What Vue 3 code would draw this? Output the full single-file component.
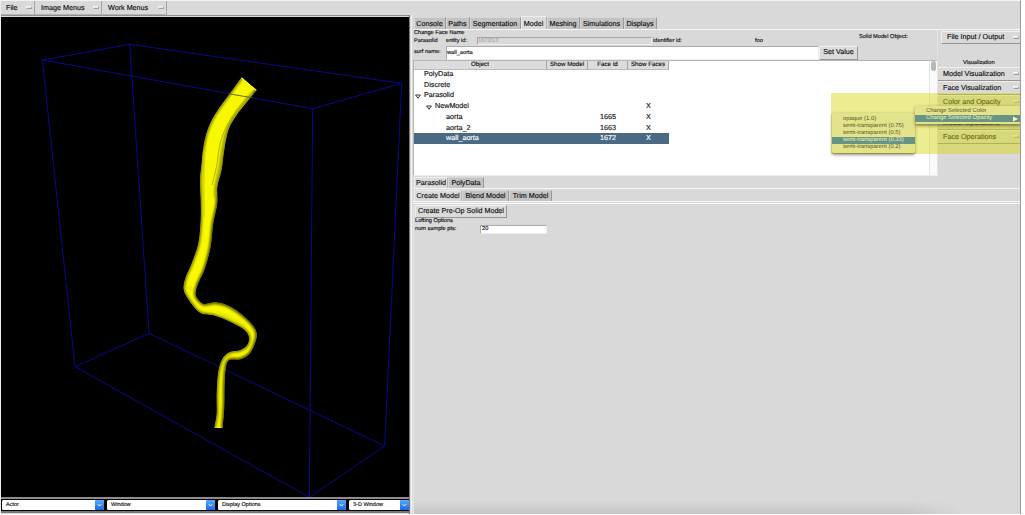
<script setup>
const menus = [
  { label: 'File', width: 34 },
  { label: 'Image Menus', width: 67 },
  { label: 'Work Menus', width: 65 },
]
const combos = [
  { label: 'Actor', width: 102 },
  { label: 'Window', width: 108 },
  { label: 'Display Options', width: 128 },
  { label: '3-D Window', width: 60 },
]
const tabs = [
  { label: 'Console', width: 32 },
  { label: 'Paths', width: 24 },
  { label: 'Segmentation', width: 51 },
  { label: 'Model', width: 26, active: true },
  { label: 'Meshing', width: 33 },
  { label: 'Simulations', width: 44 },
  { label: 'Displays', width: 33 },
]
const rows = [
  { name: 'PolyData', indent: 10 },
  { name: 'Discrete', indent: 10 },
  { name: 'Parasolid', indent: 10, open: true },
  { name: 'NewModel', indent: 21, open: true, faces: 'X' },
  { name: 'aorta', indent: 32, id: '1665', faces: 'X' },
  { name: 'aorta_2', indent: 32, id: '1663', faces: 'X' },
  { name: 'wall_aorta', indent: 32, id: '1672', faces: 'X', selected: true },
]
const opacities = ['opaque (1.0)', 'semi-transparent (0.75)', 'semi-transparent (0.5)', 'semi-transparent (0.33)', 'semi-transparent (0.2)']

const leftEdge = [[725, 142], [690, 190], [650, 245], [627, 288], [612, 340], [605, 400], [600, 450], [602, 510], [602, 570], [595, 640], [575, 700], [556, 745], [551, 780], [570, 815], [600, 848], [640, 856], [690, 875], [730, 897], [746, 918], [743, 943], [722, 960], [690, 966], [668, 985], [655, 1025], [650, 1090], [650, 1150], [643, 1194]]
const rightEdge = [[668, 1194], [673, 1130], [674, 1060], [678, 1012], [688, 990], [722, 988], [750, 970], [766, 937], [770, 908], [752, 878], [715, 845], [680, 825], [645, 817], [610, 821], [588, 797], [592, 768], [615, 715], [632, 650], [640, 580], [652, 520], [652, 470], [665, 420], [672, 365], [685, 300], [710, 255], [750, 205], [770, 180]]

// Catmull-Rom spline through the points, as cubic segments
function curve(p) {
  let d = ''
  for (let i = 0; i < p.length - 1; i++) {
    const a = p[i - 1] || p[i], b = p[i], c = p[i + 1], e = p[i + 2] || c
    d += ` C${b[0] + (c[0] - a[0]) / 6} ${b[1] + (c[1] - a[1]) / 6} ${c[0] - (e[0] - b[0]) / 6} ${c[1] - (e[1] - b[1]) / 6} ${c[0]} ${c[1]}`
  }
  return d
}
const leftPath = `M${leftEdge[0]}` + curve(leftEdge)
const rightPath = `M${rightEdge[0]}` + curve(rightEdge)
const body = leftPath + ` L${rightEdge[0]}` + curve(rightEdge) + ' Z'
</script>

<template>
  <div class="app">
    <header class="menubar">
      <div v-for="m in menus" :key="m.label" class="menu" :style="{ width: m.width + 'px' }">
        <span>{{ m.label }}</span><i class="ind"></i>
      </div>
    </header>
    <div class="main">
      <section class="left">
        <svg class="view" viewBox="3 -39 1224 1440" preserveAspectRatio="none">
          <defs>
            <clipPath id="vessel"><path :d="body" /></clipPath>
            <filter id="soft" x="-20%" y="-20%" width="140%" height="140%"><feGaussianBlur stdDeviation="3" /></filter>
          </defs>
          <g class="box">
            <path d="M127 90 389 43 1205 160 938 236Z" />
            <path d="M127 90 225 1010 447 910 389 43" />
            <path d="M225 1010 928 1402 1154 1248 447 910" />
            <path d="M938 236 928 1402M1205 160 1154 1248" />
          </g>
          <g clip-path="url(#vessel)">
            <path :d="body" class="base" />
            <path :d="leftPath" class="shade-left" filter="url(#soft)" />
            <path :d="rightPath" class="shade-right" filter="url(#soft)" />
            <path d="M756 190C694 266 674 315 666 370C660 420 648 445 646 500" class="streak wide" filter="url(#soft)" />
            <path d="M743 200C685 265 662 315 655 370C652 410 643 435 636 465" class="streak" />
            <path d="M614 360C606 430 610 500 610 560" class="streak faint wide" filter="url(#soft)" />
            <path d="M553 772Q575 770 590 790" class="streak faint" filter="url(#soft)" />
            <path d="M650 847Q700 860 735 890" class="streak faint" filter="url(#soft)" />
            <path d="M670 975Q688 970 698 985" class="streak" filter="url(#soft)" />
            <path d="M725 140 772 180" class="rim" />
          </g>
          <path d="M685 191 760 204" class="cross" />
        </svg>
        <div class="combos">
          <div v-for="c in combos" :key="c.label" class="combo" :style="{ width: c.width + 'px' }">
            <span>{{ c.label }}</span>
            <b><svg viewBox="0 0 8 10"><path d="M2.3 4.2 4 6 5.7 4.2" /></svg></b>
          </div>
        </div>
      </section>

      <section class="right">
        <nav class="tabs top">
          <div v-for="t in tabs" :key="t.label" class="tab" :class="{ active: t.active }" :style="{ width: t.width + 'px' }">{{ t.label }}</div>
        </nav>
        <div class="model">
          <div class="work">
            <div class="form">
              <div class="fields small">
                <div class="title">Change Face Name</div>
                <div class="line ids">
                  <span class="c1">Parasolid</span><span class="c2">entity id:</span>
                  <span class="disabled">1672/13</span>
                  <span class="c3">identifier id:</span><span>foo</span>
                </div>
                <div class="line surf">
                  <span class="c1">surf name:</span>
                  <span class="entry">wall_aorta</span>
                  <span class="btn set">Set Value</span>
                </div>
              </div>
              <div class="object small">Solid Model Object:</div>
            </div>
            <div class="tree">
              <div class="table">
                <div class="row head">
                  <span>Object</span><span>Show Model</span><span>Face Id</span><span>Show Faces</span>
                </div>
                <div v-for="r in rows" :key="r.name" class="row" :class="{ selected: r.selected }">
                  <span class="name" :style="{ paddingLeft: r.indent + 'px' }">
                    <svg v-if="r.open" class="arrow" viewBox="0 0 6 5"><path d="M.6 1h4.8L3 4.2Z" /></svg>{{ r.name }}
                  </span>
                  <span></span><span>{{ r.id }}</span><span>{{ r.faces }}</span>
                </div>
              </div>
              <div class="scroll"><i></i></div>
            </div>
          </div>
          <aside class="side">
            <div class="mb file">File Input / Output<i class="ind"></i></div>
            <div class="vis small">Visualization</div>
            <div class="mb">Model Visualization<i class="ind"></i></div>
            <div class="mb">Face Visualization<i class="ind"></i></div>
            <div class="mb">Color and Opacity<i class="ind"></i></div>
            <div class="mb ops">Model Operations<i class="ind"></i></div>
            <div class="mb">Face Operations<i class="ind"></i></div>
          </aside>
        </div>
        <nav class="tabs kind">
          <div class="tab active">Parasolid</div>
          <div class="tab">PolyData</div>
        </nav>
        <nav class="tabs action">
          <div class="tab active">Create Model</div>
          <div class="tab">Blend Model</div>
          <div class="tab">Trim Model</div>
        </nav>
        <div class="pane small">
          <span class="btn create">Create Pre-Op Solid Model</span>
          <div class="loft">Lofting Options</div>
          <div class="line pts"><span>num sample pts:</span><span class="entry">20</span></div>
        </div>
      </section>
    </div>

    <div class="highlight"></div>
    <div class="popup second">
      <div v-for="(o, i) in opacities" :key="o" :class="{ on: i === 3 }">{{ o }}</div>
    </div>
    <div class="popup first">
      <div>Change Selected Color</div>
      <div class="on">Change Selected Opacity<svg viewBox="0 0 5 6"><path d="M0 .5 5 3 0 5.5Z" /></svg></div>
    </div>
  </div>
</template>

<style>
body { background: #fff; overflow: hidden; }
</style>

<style scoped>
* { box-sizing: border-box; }
.app {
  position: relative; width: 1021px; height: 514px; overflow: hidden;
  display: flex; flex-direction: column;
  background: #d9d9d9; color: #111;
  border-top: 1px solid #f3f3f3; border-left: 1px solid #ececec; border-right: 1px solid #9a9a9a;
  font: 7.2px/10px "Liberation Sans", Arial, sans-serif;
  text-rendering: geometricPrecision; -webkit-text-stroke: .15px currentColor;
  white-space: nowrap;
}
.small { font-size: 5.65px; line-height: 7px; }
.menubar { display: flex; height: 14px; flex: none; }
.menu {
  display: flex; align-items: center; justify-content: space-between;
  padding: 0 2px 0 5px; border-right: 1px solid #a5a5a5; border-bottom: 1px solid #b4b4b4;
}
.menu + .menu { padding-left: 6px; }
.ind { flex: none; width: 6px; height: 3px; background: #e0e0e0; border: 1px solid #f5f5f5; border-right-color: #a8a8a8; border-bottom-color: #a0a0a0; }
.main { display: flex; flex: 1; min-height: 0; }
.left { width: 409px; flex: none; display: flex; flex-direction: column; border-top: 1px solid #8d8d8d; padding-top: 1px; border-right: 1px solid #777; }
.view { display: block; width: 408px; height: 480px; background: #000; flex: none; }
.view path { fill: none; }
.view .base { fill: #f8f800; }
.box path { stroke: #080890; stroke-width: 3; }
.shade-left { stroke: #848400; stroke-width: 10; }
.shade-right { stroke: #626200; stroke-width: 11; }
.streak { stroke: #b0b000; stroke-width: 3; }
.wide { stroke-width: 8; }
.view .faint { stroke: #cfcf00; }
.rim { stroke: #ffff20; stroke-width: 8; }
.cross { stroke: #4c4a28; stroke-width: 2.5; }
.combos { display: flex; gap: 3px; height: 16px; background: #000; border-top: 2px solid #8d8d8d; border-bottom: 2px solid #777; padding: 1px 0 1px 1px; }
.combo { display: flex; justify-content: space-between; align-items: center; height: 10px; background: #fff; border-radius: 1.5px; font-size: 5.5px; padding-left: 4px; flex: none; overflow: hidden; }
.combo b { width: 9px; height: 10px; background: linear-gradient(#5ba7fb, #176bea); flex: none; }
.combo svg { display: block; width: 9px; height: 10px; }
.combo path { fill: none; stroke: #fff; stroke-width: 1; }
.right {
  flex: 1; min-width: 0; margin-left: 1px; padding-left: 1px; border-left: 1px solid #f5f5f5;
  display: flex; flex-direction: column;
}
.tabs { display: flex; align-items: flex-end; border-bottom: 1px solid #f5f5f5; }
.tab {
  height: 11px; background: #c3c3c3; border: 1px solid #d6d6d6; border-right-color: #989898; border-bottom: 0;
  text-align: center; line-height: 10px; display: flex; justify-content: center; flex: none;
}
.tab.active { background: #dadada; border-color: #eee; border-right-color: #b5b5b5; }
.tabs.top { height: 15px; padding-left: .5px; }
.tabs.top .tab { height: 12px; line-height: 12px; }
.tabs.top .tab.active { height: 13px; line-height: 13px; }
.model { display: flex; height: 146px; flex: none; }
.work { width: 524px; flex: none; display: flex; flex-direction: column; }
.form { display: flex; height: 30px; flex: none; }
.fields { width: 446px; flex: none; padding-left: 1px; }
.title { height: 7px; }
.line { display: flex; align-items: center; }
.ids { height: 8px; }
.c1 { width: 32px; flex: none; }
.c2 { width: 31px; flex: none; }
.c3 { width: 102px; flex: none; }
.disabled { width: 175px; height: 8px; line-height: 7px; color: #aaa; border: 1px solid #a4a4a4; border-right-color: #eee; border-bottom-color: #eee; flex: none; margin-right: 1px; }
.surf { height: 15px; }
.entry { background: #fff; border: 1px solid #aaa; border-right-color: #eee; border-bottom-color: #eee; padding-left: 1px; }
.surf .entry { width: 373px; height: 14px; line-height: 12px; padding-left: 0; }
.btn { font-size: 7.17px; text-align: center; border: 1px solid #f0f0f0; border-right-color: #969696; border-bottom-color: #969696; background: #dbdbdb; }
.set { width: 39px; height: 14px; line-height: 11px; flex: none; }
.object { padding-top: 4px; }
.tree { display: flex; height: 116px; border: 1px solid #b5b5b5; border-bottom-color: #eee; border-right: 0; background: #fff; }
.table { width: 515px; }
.row { display: grid; grid-template-columns: 133px 41px 40px 41px; width: 255px; height: 10.72px; line-height: 10.5px; text-align: center; }
.name { text-align: left; position: relative; }
.arrow { position: absolute; width: 6px; height: 5px; margin: 3.5px 0 0 -9px; }
.arrow path { fill: none; stroke: #222; stroke-width: .9; }
.head { height: 8px; line-height: 7.5px; font-size: 6.2px; }
.head span { background: #dcdcdc; border-right: 1px solid #a5a5a5; border-bottom: 1px solid #bbb; }
.selected { background: #4a6984; color: #fff; }
.scroll { width: 8px; background: #fafafa; border-left: 1px solid #e3e3e3; padding: 0 1px; }
.scroll i { display: block; width: 5px; height: 10px; background: #b9b9b9; border-radius: 3px; }
.side { flex: 1; display: flex; flex-direction: column; border-left: 1px solid #e4e4e4; }
.mb { display: flex; align-items: center; justify-content: space-between; height: 14px; flex: none; padding: 0 1px 1px 5px; border-top: 1px solid #f0f0f0; border-bottom: 1px solid #949494; }
.file { margin: 1px 0 0 3px; height: 13px; padding-left: 5px; border-left: 1px solid #eee; }
.vis { height: 7px; margin: 16px 0 0 25px; flex: none; }
.ops { margin-top: 7px; }
.kind { height: 13px; flex: none; padding-left: 1px; }
.kind .tab:first-child { width: 34px; }
.kind .tab:last-child { width: 36px; }
.action { height: 13px; flex: none; padding-left: 1px; }
.action .tab:nth-child(1) { width: 48px; }
.action .tab:nth-child(2) { width: 47px; }
.action .tab:nth-child(3) { width: 43px; }
.pane {
  border-top: 1px solid #fafafa; flex: 1; padding: 1px 0 0 1px; margin-top: 1px; border-left: 1px solid #e5e5e5;
  background:
    linear-gradient(90deg, #d9d9d900 490px, #d9d9d9 550px) no-repeat 0 100% / 100% 15px,
    linear-gradient(#0000, #00000018) no-repeat 0 100% / 560px 14px;
}
.create { display: block; width: 92px; height: 13px; line-height: 10px; }
.loft { padding-left: 0; }
.pts { height: 8px; }
.pts span:first-child { width: 65px; }
.pts .entry { width: 67px; height: 9px; line-height: 7px; }
.highlight { position: absolute; left: 830px; top: 92px; width: 190px; height: 61px; background: rgba(213, 213, 8, .45); }
.popup { position: absolute; background: #e3e38b; color: #53532a; font-size: 5.85px; line-height: 7.1px; box-shadow: 0 1.5px 3px rgba(40, 40, 0, .5); border-radius: 2px; -webkit-text-stroke: 0; }
.popup .on { background: #689487; color: #f2f5b0; }
.second { left: 831px; top: 112px; width: 83px; height: 40px; padding-top: 3px; }
.second div { padding-left: 11px; }
.first { left: 914px; top: 105px; width: 106px; height: 18px; padding-top: 2px; }
.first div { padding-left: 11px; height: 7.2px; }
.first svg { position: absolute; right: 3px; width: 5px; height: 6px; margin-top: .6px; }
.first svg path { fill: #fdfdc0; }
</style>
